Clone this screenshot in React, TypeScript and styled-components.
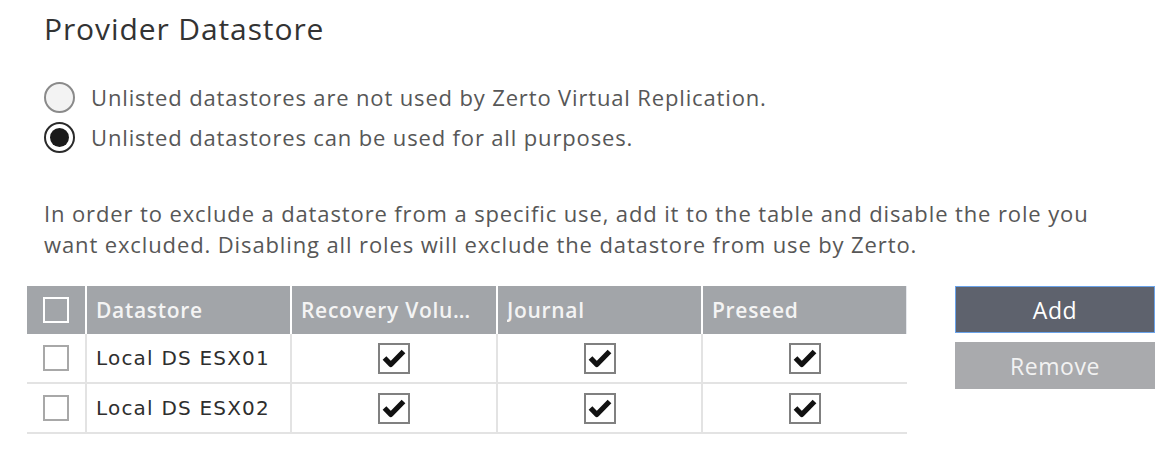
import React from "react";
import styled, { createGlobalStyle } from "styled-components";

const Global = createGlobalStyle`
  html, body { margin: 0; padding: 0; background: #ffffff; }
  body { font-family: "Open Sans", "Noto Sans", sans-serif; }
  * { box-sizing: border-box; }
`;

const Page = styled.div`
  width: 1170px;
  height: 449px;
  padding: 8px 0 0 27px;
  overflow: hidden;
`;

const Indented = styled.div`
  padding-left: 17px;
`;

const Title = styled.h1`
  margin: 0;
  font-size: 30px;
  line-height: 42px;
  font-weight: 400;
  letter-spacing: 0.9px;
  color: #333333;
`;

const RadioGroup = styled.div`
  margin-top: 32px;
  display: flex;
  flex-direction: column;
  gap: 10px;
`;

const RadioRow = styled.label`
  display: flex;
  align-items: center;
  gap: 16px;
  height: 30px;
  font-size: 22px;
  letter-spacing: 0.85px;
  color: #575757;
`;

const RadioDot = styled.span<{ $checked?: boolean }>`
  width: 31px;
  height: 31px;
  border-radius: 50%;
  border: 2px solid ${(p) => (p.$checked ? "#2a2a2a" : "#8a8a8a")};
  background: ${(p) => (p.$checked ? "#ffffff" : "#f3f3f3")};
  display: flex;
  align-items: center;
  justify-content: center;
  flex: none;
  &::after {
    content: "";
    display: ${(p) => (p.$checked ? "block" : "none")};
    width: 19px;
    height: 19px;
    border-radius: 50%;
    background: #1a1a1a;
  }
`;

const Paragraph = styled.p`
  margin: 46px 0 0 0;
  font-size: 22px;
  line-height: 31px;
  letter-spacing: 0.88px;
  color: #575757;
  white-space: nowrap;
`;

const TableArea = styled.div`
  margin-top: 26px;
  display: flex;
  align-items: flex-start;
  gap: 48px;
`;

const Grid = styled.div`
  display: grid;
  grid-template-columns: 60px 205px 206px 205px 204px;
  width: 880px;
`;

const HeadCell = styled.div<{ $last?: boolean; $center?: boolean }>`
  height: 48px;
  background: #a2a5a9;
  color: #f4f4f4;
  font-weight: 600;
  font-size: 21px;
  letter-spacing: 0.7px;
  display: flex;
  align-items: center;
  justify-content: ${(p) => (p.$center ? "center" : "flex-start")};
  padding: 0 ${(p) => (p.$center ? "0" : "9px")};
  border-right: ${(p) => (p.$last ? "1px solid #e6e8ec" : "2px solid #ffffff")};
  white-space: nowrap;
  overflow: hidden;
  span {
    overflow: hidden;
    text-overflow: ellipsis;
    white-space: nowrap;
  }
`;

const BodyCell = styled.div<{ $last?: boolean; $center?: boolean }>`
  height: 50px;
  border-bottom: 2px solid #e3e3e3;
  border-right: ${(p) => (p.$last ? "none" : "2px solid #e3e3e3")};
  display: flex;
  align-items: center;
  justify-content: ${(p) => (p.$center ? "center" : "flex-start")};
  padding: 0 ${(p) => (p.$center ? "0" : "9px")};
  font-family: "DejaVu Sans", Verdana, sans-serif;
  font-size: 20px;
  letter-spacing: 1.2px;
  color: #2e2e2e;
`;

const PlainBox = styled.span<{ $light?: boolean }>`
  width: 26px;
  height: 26px;
  border: 2px solid ${(p) => (p.$light ? "#ffffff" : "#a8a8a8")};
  background: transparent;
  display: inline-block;
`;

const CheckBox = styled.span`
  width: 32px;
  height: 31px;
  border: 2px solid #808080;
  background: #ffffff;
  display: inline-flex;
  align-items: center;
  justify-content: center;
  svg { display: block; }
`;

const Buttons = styled.div`
  display: flex;
  flex-direction: column;
  gap: 9px;
`;

const Button = styled.button<{ $primary?: boolean }>`
  width: 200px;
  height: 47px;
  border: ${(p) => (p.$primary ? "1px solid #6aa3ea" : "none")};
  background: ${(p) => (p.$primary ? "#5e626d" : "#a9aaad")};
  color: ${(p) => (p.$primary ? "#ffffff" : "#f2f2f2")};
  font-family: "Open Sans", sans-serif;
  font-size: 23px;
  letter-spacing: 0.6px;
  font-weight: 400;
  padding: 0;
  cursor: pointer;
`;

const Check = () => (
  <CheckBox>
    <svg width="28" height="27" viewBox="0 0 28 27">
      <polyline
        points="4.5,13 10.8,19.5 23.5,6.5"
        fill="none"
        stroke="#111111"
        strokeWidth="5.2"
        strokeLinejoin="round"
      />
    </svg>
  </CheckBox>
);

const rows = ["Local DS ESX01", "Local DS ESX02"];

export default function App() {
  return (
    <Page>
      <Global />
      <Indented>
        <Title>Provider Datastore</Title>
        <RadioGroup>
          <RadioRow>
            <RadioDot />
            Unlisted datastores are not used by Zerto Virtual Replication.
          </RadioRow>
          <RadioRow>
            <RadioDot $checked />
            Unlisted datastores can be used for all purposes.
          </RadioRow>
        </RadioGroup>
        <Paragraph>
          In order to exclude a datastore from a specific use, add it to the table and disable the role you
          <br />
          want excluded. Disabling all roles will exclude the datastore from use by Zerto.
        </Paragraph>
      </Indented>
      <TableArea>
        <Grid>
          <HeadCell $center>
            <PlainBox $light />
          </HeadCell>
          <HeadCell>
            <span>Datastore</span>
          </HeadCell>
          <HeadCell>
            <span>Recovery Volumes</span>
          </HeadCell>
          <HeadCell>
            <span>Journal</span>
          </HeadCell>
          <HeadCell $last>
            <span>Preseed</span>
          </HeadCell>
          {rows.map((name) => (
            <React.Fragment key={name}>
              <BodyCell $center>
                <PlainBox />
              </BodyCell>
              <BodyCell>{name}</BodyCell>
              <BodyCell $center>
                <Check />
              </BodyCell>
              <BodyCell $center>
                <Check />
              </BodyCell>
              <BodyCell $center $last>
                <Check />
              </BodyCell>
            </React.Fragment>
          ))}
        </Grid>
        <Buttons>
          <Button $primary>Add</Button>
          <Button>Remove</Button>
        </Buttons>
      </TableArea>
    </Page>
  );
}
